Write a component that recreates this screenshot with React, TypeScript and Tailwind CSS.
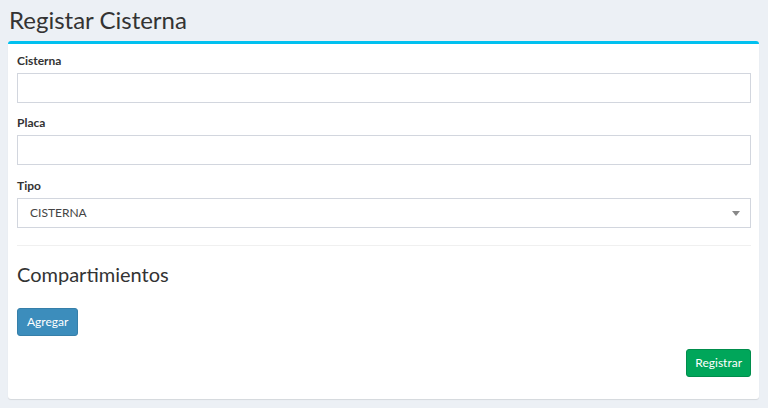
import React from "react";

const font = { fontFamily: '"Lato", "Liberation Sans", sans-serif' };

const Field = ({ label, mb, children }: { label: string; mb: string; children: React.ReactNode }) => (
  <div className={mb}>
    <label className="block text-[12px] leading-[14px] font-bold text-[#333] mb-[5px]">{label}</label>
    {children}
  </div>
);

const App = () => {
  return (
    <div className="min-h-[408px] bg-[#ecf0f5] pl-2 pr-[9px] pt-[5px] pb-2" style={font}>
      <h1 className="text-[24px] leading-[30px] text-[#333] ml-[1px] mb-[6px]">Registar Cisterna</h1>
      <div className="bg-white border-t-[3px] border-[#00c0ef] rounded-[3px] shadow-[0_1px_1px_rgba(0,0,0,0.1)] pl-[9px] pr-[8px] pt-[10px] pb-[22px]">
        <Field label="Cisterna" mb="mb-[13px]">
          <input className="block w-full h-[30px] border border-[#d2d6de] outline-none px-3 text-[12px]" />
        </Field>
        <Field label="Placa" mb="mb-[14px]">
          <input className="block w-full h-[30px] border border-[#d2d6de] outline-none px-3 text-[12px]" />
        </Field>
        <Field label="Tipo" mb="mb-0">
          <div className="flex items-center justify-between h-[30px] border border-[#d2d6de] pl-3 pr-[10px]">
            <span className="text-[12px] text-[#444]">CISTERNA</span>
            <span className="w-0 h-0 border-l-[4px] border-r-[4px] border-t-[5px] border-l-transparent border-r-transparent border-t-[#888]" />
          </div>
        </Field>
        <hr className="border-0 border-t border-[#f0f0f0] mt-[17px] mb-[15px]" />
        <h3 className="text-[20px] leading-[26px] text-[#333] mb-[21px]">Compartimientos</h3>
        <button className="bg-[#3c8dbc] border border-[#367fa9] text-white text-[12px] rounded-[3px] h-[28px] px-[9px]">
          Agregar
        </button>
        <div className="flex justify-end mt-[13px]">
          <button className="bg-[#00a65a] border border-[#008d4c] text-white text-[12px] rounded-[3px] h-[28px] px-[8px]">
            Registrar
          </button>
        </div>
      </div>
    </div>
  );
};

export default App;
